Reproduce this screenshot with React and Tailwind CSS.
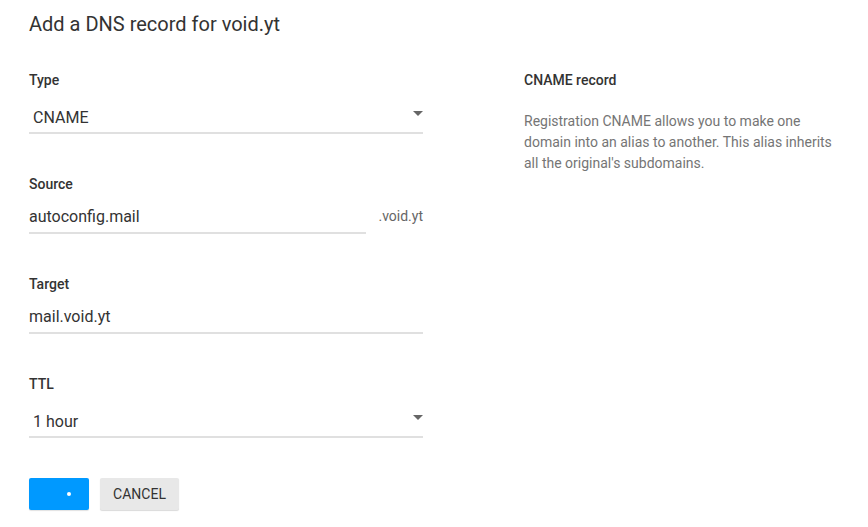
import React from 'react';

function Caret() {
  return (
    <svg width="10" height="5" viewBox="0 0 10 5" className="mt-[5px] shrink-0">
      <path d="M0 0 L10 0 L5 5 Z" fill="#666" />
    </svg>
  );
}

function Label({ children, className = '' }) {
  return (
    <div className={`text-[14px] leading-[20px] font-medium text-[#333] ${className}`}>{children}</div>
  );
}

function SelectField({ label, value, className = '' }) {
  return (
    <div className={className}>
      <Label>{label}</Label>
      <div className="flex items-start pt-[16px] pb-[2px] pl-[4px] border-b-2 border-[#e0e0e0]">
        <span className="flex-1 text-[16px] leading-[24px] text-[#333]">{value}</span>
        <Caret />
      </div>
    </div>
  );
}

function TextField({ label, value, suffix, className = '' }) {
  return (
    <div className={className}>
      <Label>{label}</Label>
      <div className="flex items-end">
        <div className="flex-1 pt-[11px] pb-[3px] border-b-2 border-[#e0e0e0] text-[16px] leading-[24px] text-[#333]">
          {value}
        </div>
        {suffix && (
          <span className="ml-[12px] pb-[8px] text-[14px] leading-[20px] text-[#666]">{suffix}</span>
        )}
      </div>
    </div>
  );
}

export default function App() {
  return (
    <div className="min-h-screen bg-white px-[29px] pt-[10px] font-['Roboto',sans-serif]">
      <h1 className="text-[20px] leading-[28px] text-[#333]">Add a DNS record for void.yt</h1>

      <div className="mt-[32px] flex">
        <div className="w-[394px] shrink-0">
          <SelectField label="Type" value="CNAME" />
          <TextField className="mt-[40px]" label="Source" value="autoconfig.mail" suffix=".void.yt" />
          <TextField className="mt-[40px]" label="Target" value="mail.void.yt" />
          <SelectField className="mt-[40px]" label="TTL" value="1 hour" />

          <div className="mt-[40px] flex gap-[11px]">
            <button className="w-[60px] h-[32px] rounded-[2px] bg-[#0099ff] flex items-center justify-center shadow-[0_1px_1px_rgba(0,0,0,0.12)]">
              <span className="ml-[20px] w-[4px] h-[4px] rounded-full bg-white"></span>
            </button>
            <button className="w-[79px] h-[32px] rounded-[2px] bg-[#e8e8e8] text-[14px] text-[#333] shadow-[0_1px_1px_rgba(0,0,0,0.15)]">
              CANCEL
            </button>
          </div>
        </div>

        <div className="ml-[101px] w-[318px]">
          <Label>CNAME record</Label>
          <p className="mt-[21px] text-[14px] leading-[21px] text-[#757575]">
            Registration CNAME allows you to make one domain into an alias to another. This alias inherits all the original's subdomains.
          </p>
        </div>
      </div>
    </div>
  );
}
